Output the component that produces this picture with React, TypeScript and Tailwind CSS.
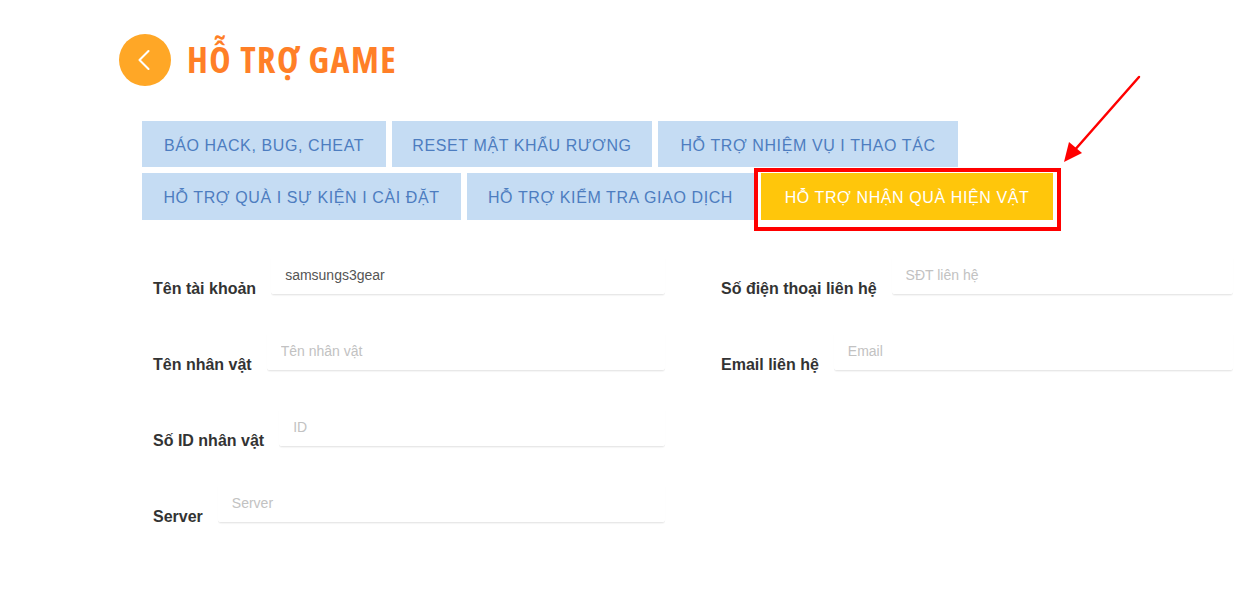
import { ChevronLeft } from "lucide-react";

const row1 = [
  { label: "BÁO HACK, BUG, CHEAT", w: "w-[244px]" },
  { label: "RESET MẬT KHẨU RƯƠNG", w: "w-[260px]" },
  { label: "HỖ TRỢ NHIỆM VỤ I THAO TÁC", w: "w-[300px]" },
];

const row2 = [
  { label: "HỖ TRỢ QUÀ I SỰ KIỆN I CÀI ĐẶT", w: "w-[319px]" },
  { label: "HỖ TRỢ KIỂM TRA GIAO DỊCH", w: "w-[287px]" },
];

function Field({ label, placeholder, value }: { label: string; placeholder: string; value?: string }) {
  return (
    <div className="flex items-end gap-[15px]">
      <span className="whitespace-nowrap text-[16px] font-bold leading-3 text-[#333]">{label}</span>
      <input
        readOnly
        defaultValue={value}
        placeholder={placeholder}
        className="h-[40px] min-w-0 flex-1 rounded-[3px] border-b border-[#e8e8e8] px-[14px] text-[14px] text-[#555] shadow-[0_1px_1px_rgba(0,0,0,0.04)] outline-none placeholder:text-[#c2c2c2]"
      />
    </div>
  );
}

export default function App() {
  return (
    <div className="relative min-h-screen bg-white pl-[119px] pt-[34px] font-['Liberation_Sans',Arial,sans-serif]">
      <div className="flex h-[52px] items-center gap-4">
        <div className="flex h-[52px] w-[52px] items-center justify-center rounded-full bg-[#ffa726]">
          <ChevronLeft className="h-9 w-9 -translate-x-[1px] text-white" strokeWidth={1.4} />
        </div>
        <h1 className="font-['Open_Sans',sans-serif] text-[36px] font-bold leading-none tracking-[1.5px] text-[#ff7f27] [font-stretch:75%]">
          HỖ TRỢ GAME
        </h1>
      </div>

      <div className="ml-[23px] mt-[35px] flex flex-col gap-[6px]">
        <div className="flex gap-[6px]">
          {row1.map((t) => (
            <div key={t.label} className={`${t.w} flex h-[46px] items-center justify-center bg-[#c5dcf3] pt-[3px] text-[16px] tracking-[0.6px] text-[#4d7dc0]`}>
              {t.label}
            </div>
          ))}
        </div>
        <div className="flex gap-[6px]">
          {row2.map((t) => (
            <div key={t.label} className={`${t.w} flex h-[47px] items-center justify-center bg-[#c5dcf3] pt-[3px] text-[16px] tracking-[0.6px] text-[#4d7dc0]`}>
              {t.label}
            </div>
          ))}
          <div className="relative ml-[1px]">
            <div className="flex h-[47px] w-[292px] items-center justify-center bg-[#ffc60b] pt-[3px] text-[16px] tracking-[0.6px] text-white">
              HỖ TRỢ NHẬN QUÀ HIỆN VẬT
            </div>
            <div className="pointer-events-none absolute -bottom-[11px] -left-[7px] -right-[8px] -top-[5px] border-4 border-[#f00]" />
          </div>
        </div>
      </div>

      <div className="ml-[34px] mt-[35px] grid w-[1080px] grid-cols-2 gap-x-[56px] gap-y-[36px]">
        <Field label="Tên tài khoản" placeholder="" value="samsungs3gear" />
        <Field label="Số điện thoại liên hệ" placeholder="SĐT liên hệ" />
        <Field label="Tên nhân vật" placeholder="Tên nhân vật" />
        <Field label="Email liên hệ" placeholder="Email" />
        <Field label="Số ID nhân vật" placeholder="ID" />
        <div />
        <Field label="Server" placeholder="Server" />
      </div>

      <svg className="pointer-events-none absolute left-[1055px] top-[70px]" width="95" height="100" viewBox="0 0 95 100">
        <line x1="84" y1="7" x2="18" y2="82" stroke="#f00" strokeWidth="2.5" strokeLinecap="round" />
        <polygon points="9,92 14,72 27,83" fill="#f00" />
      </svg>
    </div>
  );
}
